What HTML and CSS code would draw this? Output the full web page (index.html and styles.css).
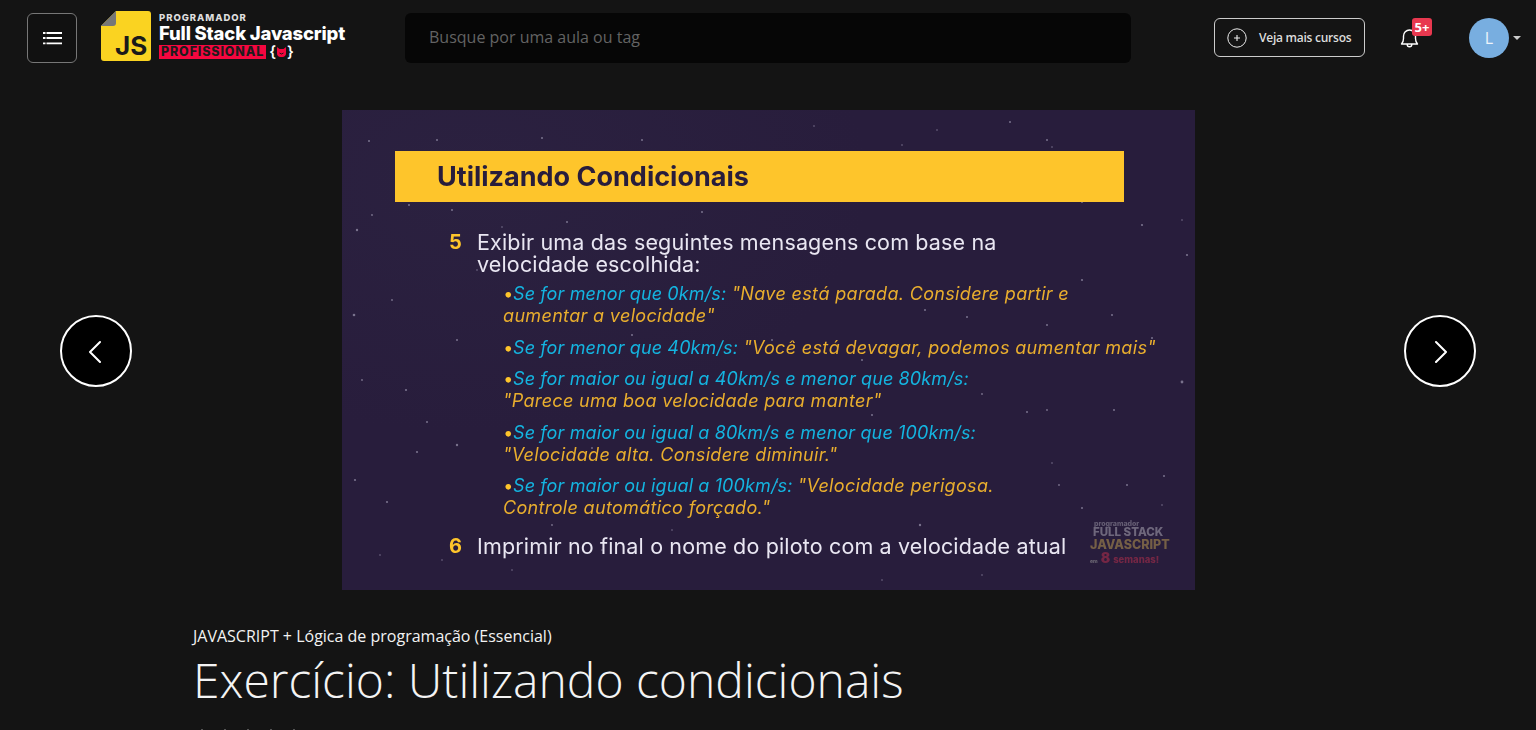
FILE: index.html
```html
<!DOCTYPE html>
<html lang="pt-BR">
<head>
<meta charset="utf-8">
<title>Exercício: Utilizando condicionais</title>
<link rel="stylesheet" href="styles.css">
</head>
<body>
<header class="topbar">
  <button class="menu-btn" aria-label="Menu">
    <svg width="20" height="14" viewBox="0 0 20 14"><path d="M1 2h19M1 7h19M1 12.300h19" stroke="#fff" stroke-width="1.800"/><path d="M4 0v14" stroke="#111" stroke-width="1"/></svg>
  </button>
  <div class="logo">
    <svg class="logo-mark" width="50" height="50" viewBox="0 0 50 50">
      <path d="M15 0H47a3 3 0 0 1 3 3V47a3 3 0 0 1-3 3H3a3 3 0 0 1-3-3V15Z" fill="#fad321"/>
      <path d="M15 0V12a3 3 0 0 1-3 3H0Z" fill="#777"/>
      <text x="14" y="44" class="logo-js">JS</text>
    </svg>
    <div class="logo-text">
      <span class="logo-top">PROGRAMADOR</span>
      <span class="logo-main">Full Stack Javascript</span>
      <span class="logo-row"><span class="logo-pro">PROFISSIONAL</span><span class="logo-brace">{<svg class="logo-cat" width="11" height="12" viewBox="0 0 11 12"><path d="M1 1l2.500 2h4L10 1v6a3.500 3.500 0 0 1-3.500 4h-2A3.500 3.500 0 0 1 1 7Z" fill="#f5073f"/><path d="M3.500 7q2 2 4 0" fill="none" stroke="#1a1a1a" stroke-width="1"/></svg>}</span></span>
    </div>
  </div>
  <div class="search">Busque por uma aula ou tag</div>
  <a class="more-btn">
    <svg width="20" height="20" viewBox="0 0 20 20"><circle cx="10" cy="10" r="9.200" fill="none" stroke="#eee" stroke-width="1"/><path d="M10 7v6M7 10h6" stroke="#eee" stroke-width="1.100"/></svg>
    <span>Veja mais cursos</span>
  </a>
  <div class="bell">
    <svg width="20" height="22" viewBox="0 0 20 22"><path d="M1.500 17c1.500-1.500 2-2.500 2-5.500V9a6 6 0 0 1 12 0v2.500c0 3 .5 4 2 5.500Z M7.200 17.500a2.300 2.300 0 0 0 4.600 0" fill="none" stroke="#fff" stroke-width="1.400" stroke-linejoin="round"/></svg>
    <span class="badge">5+</span>
  </div>
  <div class="user">
    <span class="avatar">L</span>
    <span class="caret"></span>
  </div>
</header>

<main>
  <section class="stage">
    <button class="nav-btn" aria-label="Anterior"><svg width="16" height="24" viewBox="0 0 16 24"><path d="M12 3 2 13l10 10" fill="none" stroke="#fff" stroke-width="2" stroke-linecap="round" stroke-linejoin="round"/></svg></button>
    <div class="slide">
      <svg class="stars" width="853" height="480" viewBox="0 0 853 480">
        <g fill="#c9c5dc" opacity=".5">
          <circle cx="15" cy="120" r="1.200"/><circle cx="12" cy="205" r="1.300"/><circle cx="67" cy="95" r="1"/><circle cx="27" cy="31" r="1"/><circle cx="95" cy="30" r="1"/><circle cx="200" cy="28" r="1"/><circle cx="300" cy="30" r="1"/><circle cx="30" cy="105" r=".9"/><circle cx="110" cy="100" r="1"/><circle cx="70" cy="62" r=".8"/><circle cx="20" cy="270" r=".9"/><circle cx="50" cy="190" r=".9"/><circle cx="64" cy="280" r="1.100"/><circle cx="85" cy="312" r="1"/><circle cx="75" cy="342" r="1.100"/><circle cx="115" cy="335" r="1.200"/><circle cx="13" cy="370" r="1.100"/><circle cx="45" cy="392" r="1.100"/><circle cx="38" cy="445" r=".8"/><circle cx="100" cy="450" r=".8"/><circle cx="170" cy="460" r=".8"/><circle cx="260" cy="440" r=".8"/><circle cx="115" cy="230" r="1"/><circle cx="135" cy="160" r=".8"/><circle cx="225" cy="112" r="1"/><circle cx="160" cy="117" r=".8"/><circle cx="360" cy="102" r="1"/><circle cx="315" cy="130" r="1"/><circle cx="290" cy="225" r="1"/><circle cx="250" cy="338" r=".9"/><circle cx="380" cy="270" r=".9"/><circle cx="430" cy="230" r=".9"/><circle cx="472" cy="16" r=".8"/><circle cx="595" cy="20" r=".8"/><circle cx="705" cy="30" r="1"/><circle cx="710" cy="37" r=".8"/><circle cx="668" cy="12" r="1"/><circle cx="800" cy="115" r="1.100"/><circle cx="740" cy="170" r="1.100"/><circle cx="845" cy="145" r="1.100"/><circle cx="770" cy="205" r="1"/><circle cx="740" cy="92" r="1"/><circle cx="840" cy="110" r=".8"/><circle cx="625" cy="207" r="1"/><circle cx="583" cy="200" r="1"/><circle cx="705" cy="215" r="1"/><circle cx="810" cy="228" r="1"/><circle cx="840" cy="272" r="1.400"/><circle cx="705" cy="300" r=".9"/><circle cx="685" cy="302" r="1"/><circle cx="772" cy="300" r="1"/><circle cx="640" cy="284" r=".9"/><circle cx="822" cy="366" r="1"/><circle cx="785" cy="375" r="1"/><circle cx="717" cy="375" r=".9"/><circle cx="740" cy="398" r="1"/><circle cx="710" cy="353" r=".8"/><circle cx="820" cy="395" r=".8"/><circle cx="578" cy="415" r="1.200"/><circle cx="520" cy="250" r="1"/><circle cx="530" cy="305" r="1"/><circle cx="435" cy="372" r="1"/><circle cx="420" cy="68" r=".8"/><circle cx="500" cy="60" r=".8"/><circle cx="560" cy="35" r=".8"/><circle cx="210" cy="415" r=".9"/><circle cx="330" cy="420" r=".8"/><circle cx="640" cy="465" r=".8"/><circle cx="540" cy="470" r=".8"/>
        </g>
      </svg>
      <div class="slide-inner">
        <h2 class="slide-title">Utilizando Condicionais</h2>
        <div class="step">
          <span class="step-num">5</span>
          <p class="step-text">Exibir uma das seguintes mensagens com base na<br>velocidade escolhida:</p>
        </div>
        <ul class="rules">
          <li><b>•</b><em>Se for menor que 0km/s:</em> "Nave está parada. Considere partir e<br>aumentar a velocidade"</li>
          <li><b>•</b><em>Se for menor que 40km/s:</em> "Você está devagar, podemos aumentar mais"</li>
          <li><b>•</b><em>Se for maior ou igual a 40km/s e menor que 80km/s:</em><br>"Parece uma boa velocidade para manter"</li>
          <li><b>•</b><em>Se for maior ou igual a 80km/s e menor que 100km/s:</em><br>"Velocidade alta. Considere diminuir."</li>
          <li><b>•</b><em>Se for maior ou igual a 100km/s:</em> "Velocidade perigosa.<br>Controle automático forçado."</li>
        </ul>
        <div class="step step-last">
          <span class="step-num">6</span>
          <p class="step-text">Imprimir no final o nome do piloto com a velocidade atual</p>
        </div>
      </div>
      <div class="watermark">
        <span class="wm-a">programador</span>
        <span class="wm-b">FULL STACK</span>
        <span class="wm-c">JAVASCRIPT</span>
        <span class="wm-d"><small>em</small> <strong>8</strong> semanas!</span>
      </div>
    </div>
    <button class="nav-btn" aria-label="Próxima"><svg width="16" height="24" viewBox="0 0 16 24"><path d="M4 3l10 10L4 23" fill="none" stroke="#fff" stroke-width="2" stroke-linecap="round" stroke-linejoin="round"/></svg></button>
  </section>

  <section class="lesson">
    <p class="course">JAVASCRIPT + Lógica de programação (Essencial)</p>
    <h1 class="lesson-title">Exercício: Utilizando condicionais</h1>
    <div class="rating"><i></i><i></i><i></i><i></i><i></i></div>
  </section>
</main>
</body>
</html>
```
FILE: styles.css
```css
* { box-sizing: border-box; }
html, body { margin: 0; height: 100%; overflow: hidden; }
body { background: #141414; color: #fff; font-family: "Open Sans", sans-serif; }

.topbar { display: flex; align-items: center; height: 76px; padding: 0 15px 1px 27px; }
.menu-btn { display: flex; align-items: center; justify-content: center; width: 50px; height: 50px; padding: 0; background: #111; border: 1px solid #777; border-radius: 6px; }
.logo { display: flex; align-items: center; width: 304px; margin-left: 24px; margin-bottom: 4px; gap: 8px; }
.logo-mark { flex: none; }
.logo-js { font: 700 26px "Inter", sans-serif; fill: #1a1a1a; }
.logo-text { display: flex; flex-direction: column; font-family: "Inter", sans-serif; font-weight: 800; line-height: 1; }
.logo-top { font-size: 9.500px; color: #ddd; letter-spacing: .95px; }
.logo-main { font-size: 18.500px; margin: 2px 0; letter-spacing: -.18px; white-space: nowrap; }
.logo-row { display: flex; align-items: center; gap: 3px; }
.logo-pro { background: #f5073f; color: #1c1c1c; font-size: 12.500px; line-height: 14px; padding: 0 2px; letter-spacing: .85px; }
.logo-brace { font-size: 15px; font-weight: 600; line-height: 14px; display: flex; align-items: center; gap: 0; }
.logo-cat { flex: none; }

.search { width: 726px; height: 50px; background: #060606; border-radius: 6px; padding: 0 0 1px 24px; display: flex; align-items: center; font-size: 16px; color: #636363; }
.more-btn { display: flex; align-items: center; gap: 12px; width: 151px; height: 39px; margin-left: 83px; padding-left: 12px; border: 1px solid #ccc; border-radius: 6px; font-size: 12px; font-weight: 600; letter-spacing: -.25px; color: #ddd; white-space: nowrap; }
.bell { position: relative; width: 20px; height: 22px; margin-left: 35px; }
.badge { position: absolute; left: 12px; top: -9px; width: 20px; height: 18px; background: #e8384f; border-radius: 3px; font-size: 13px; font-weight: 700; line-height: 18px; text-align: center; }
.user { display: flex; align-items: center; margin-left: 49px; gap: 4px; }
.avatar { display: flex; align-items: center; justify-content: center; width: 40px; height: 40px; border-radius: 50%; background: #78aee0; font-size: 16px; color: #eef4fa; }
.caret { width: 0; height: 0; border: 4px solid transparent; border-top-color: #ccc; border-bottom: 0; }

.stage { display: flex; align-items: center; justify-content: space-between; padding: 0 60px; margin-top: 34px; }
.nav-btn { display: flex; align-items: center; justify-content: center; flex: none; width: 72px; height: 72px; margin-top: 1px; padding: 0; background: #000; border: 2px solid #fff; border-radius: 50%; }
.slide { position: relative; width: 853px; height: 480px; margin-left: 138px; margin-right: 137px; overflow: hidden; flex: none;
  background: radial-gradient(ellipse 400px 250px at 15% 15%, #2b2140, transparent), #281d3c; font-family: "Inter", sans-serif; }
.stars { position: absolute; inset: 0; }
.slide-inner { position: relative; padding: 41px 0 0 53px; filter: blur(.35px); }
.slide-title { width: 729px; height: 51px; margin: 0; padding-left: 42px; background: #fec52b; color: #281d3c; font-size: 27px; font-weight: 700; line-height: 52px; }
.step { display: flex; margin-top: 29px; margin-left: 54px; }
.step-num { width: 28px; color: #fec52b; font-size: 20px; font-weight: 700; line-height: 22px; }
.step-text { margin: 0; color: #e9e6f2; font-size: 21.500px; line-height: 22px; letter-spacing: .15px; white-space: nowrap; }
.rules { list-style: none; margin: 8px 0 0 108px; padding: 0; font-size: 18px; line-height: 22px; letter-spacing: .33px; font-style: italic; color: #e9ae2e; white-space: nowrap; }
.rules li { margin-bottom: 9.600px; }
.rules b { display: inline-block; width: 10px; padding-left: 1px; color: #fec52b; font-size: 18px; line-height: 1; font-style: normal; letter-spacing: 0; }
.rules em { color: #14b4e0; letter-spacing: .12px; }
.step-last { margin-top: 16px; }
.watermark { position: absolute; left: 748px; top: 410px; display: flex; flex-direction: column; font-weight: 800; line-height: 1; opacity: .6; filter: blur(.3px); }
.wm-a { font-size: 7px; color: #8d8798; margin-left: 4px; }
.wm-b { font-size: 11.500px; color: #9e99a8; margin-left: 3px; }
.wm-c { font-size: 12.500px; color: #a98c4d; }
.wm-d { font-size: 9.500px; color: #a82d4a; display: flex; align-items: baseline; gap: 3px; }
.wm-d small { font-size: 5px; color: #999; }
.wm-d strong { font-size: 14px; }

.lesson { padding: 36px 0 0 193px; }
.course { margin: 0; font-size: 16px; line-height: 20px; color: #f2f2f2; }
.lesson-title { margin: 0; font-size: 48px; font-weight: 300; line-height: 68px; color: #f4f4f4; white-space: nowrap; }
.rating { display: flex; gap: 21px; margin: 15px 0 0 8px; }
.rating i { width: 2px; height: 4px; background: #555; }
```
